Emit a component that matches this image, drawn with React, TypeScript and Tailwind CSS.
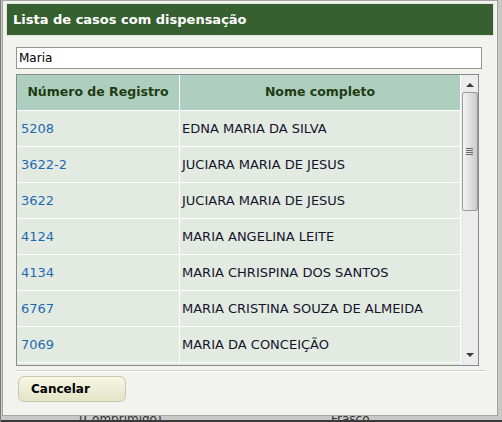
import React from "react";

const rows: [string, string][] = [
  ["5208", "EDNA MARIA DA SILVA"],
  ["3622-2", "JUCIARA MARIA DE JESUS"],
  ["3622", "JUCIARA MARIA DE JESUS"],
  ["4124", "MARIA ANGELINA LEITE"],
  ["4134", "MARIA CHRISPINA DOS SANTOS"],
  ["6767", "MARIA CRISTINA SOUZA DE ALMEIDA"],
  ["7069", "MARIA DA CONCEIÇÃO"],
  ["7102", "MARIA DAS GRAÇAS"],
];

export default function App() {
  return (
    <div
      className="relative w-[502px] h-[422px] overflow-hidden bg-[#c8c8c6] border-l border-[#7a7a7a]"
      style={{ fontFamily: '"DejaVu Sans", Verdana, sans-serif' }}
    >
      {/* page behind the dialog */}
      <div className="absolute left-[78px] top-[410px] text-[12px] text-[#333]">(Comprimido)</div>
      <div className="absolute left-[330px] top-[410px] text-[12px] text-[#333]">Frasco</div>
      <div className="absolute left-0 right-0 bottom-0 h-[2px] bg-[#3a3a3a]" />

      <div className="relative z-10 ml-[1px] w-[496px] h-[416px] bg-[#f2f3ee] border border-[#a4a4a0] flex flex-col">
        <div className="mx-[3px] mt-[2px] h-[33px] bg-[#36602f] border border-[#e2e6dc] flex items-center pl-[6px]">
          <span className="text-white font-bold text-[13px]">Lista de casos com dispensação</span>
        </div>

        <div className="ml-[13px] mt-[11px] w-[466px] h-[22px] bg-white border border-[#8b9a8b] flex items-center pl-[2px] text-[12px] text-black">
          Maria
        </div>

        <div className="ml-[13px] mt-[5px] w-[463px] h-[292px] border border-[#8a8a8a] flex overflow-hidden">
          <div className="w-[443px] flex flex-col gap-px bg-white">
            <div className="flex gap-px h-[35px] shrink-0">
              <div className="w-[162px] bg-[#aecfbf] flex items-center justify-center text-[12.5px] font-bold text-[#1f3c12]">
                Número de Registro
              </div>
              <div className="flex-1 bg-[#aecfbf] flex items-center justify-center text-[12.5px] font-bold text-[#1f3c12]">
                Nome completo
              </div>
            </div>
            {rows.map(([n, name]) => (
              <div key={n + name} className="flex gap-px h-[35px] shrink-0">
                <div className="w-[162px] bg-[#e3eae2] flex items-center pl-[4px] text-[13px] text-[#1f6aae]">{n}</div>
                <div className="flex-1 bg-[#e3eae2] flex items-center pl-[2px] text-[13px] text-[#14142a]">{name}</div>
              </div>
            ))}
          </div>
          <div className="w-px bg-white" />
          <div className="flex-1 bg-[#ececec] flex flex-col items-center">
            <svg width="8" height="5" className="mt-[7px]" viewBox="0 0 8 5">
              <path d="M0 5 L4 1 L8 5 Z" fill="#3a3a3a" />
            </svg>
            <div className="mt-[5px] w-[16px] h-[119px] rounded-[2px] border border-[#9a9a9a] bg-gradient-to-r from-[#f4f4f4] via-[#e0e0e0] to-[#c9c9c9] flex flex-col items-center justify-center gap-[1px]">
              <div className="w-[7px] h-px bg-[#6a6a6a]" />
              <div className="w-[7px] h-px bg-[#6a6a6a]" />
              <div className="w-[7px] h-px bg-[#6a6a6a]" />
              <div className="w-[7px] h-px bg-[#6a6a6a]" />
            </div>
            <div className="flex-1" />
            <svg width="8" height="5" className="mb-[7px]" viewBox="0 0 8 5">
              <path d="M0 0 L8 0 L4 4 Z" fill="#3a3a3a" />
            </svg>
          </div>
        </div>

        <div className="ml-[13px] mt-[4px] w-[470px] h-[2px] border-t border-[#cfd0cc] border-b border-b-white" />

        <div className="ml-[15px] mt-[4px] w-[108px] h-[26px] rounded-[6px] border border-[#c6c8a8] bg-gradient-to-b from-[#f6f6e4] to-[#e3e5c6] flex items-center pl-[12px] text-[12px] font-bold text-black">
          Cancelar
        </div>
      </div>
    </div>
  );
}
